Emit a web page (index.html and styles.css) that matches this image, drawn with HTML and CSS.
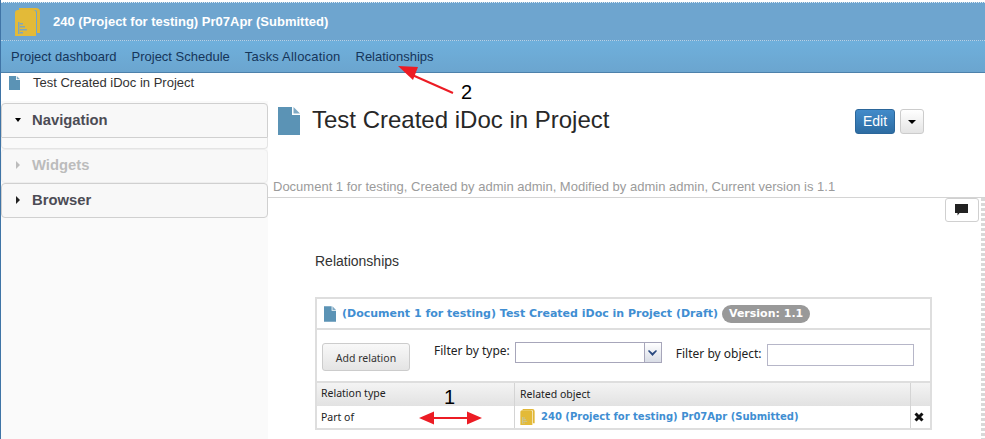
FILE: index.html
```html
<!DOCTYPE html>
<html>
<head lang="en">
    <meta charset="UTF-8">
    <title>Test Created iDoc in Project</title>
    <link rel="stylesheet" href="styles.css">
</head>
<body>
<div id="page">
    <div id="header">
        <svg class="project-icon" width="25" height="28" viewBox="0 0 25 28">
            <path d="M4 0h17a4 4 0 0 1 4 4v21h-3V4a2 2 0 0 0-2-2H4z" fill="#e0b636"/>
            <path d="M0 5a3 3 0 0 1 3-3h15a3 3 0 0 1 3 3v23H0z" fill="#e3ba38"/>
            <path d="M3 14h1.500v12H3zM5 15h3v1.500H5zM5 18h5v1.500H5zM5 21h7v1.500H5zM5 24h3v1.500H5z" fill="#7fa6bb"/>
        </svg>
        <span class="header-title">240 (Project for testing) Pr07Apr (Submitted)</span>
    </div>
    <ul id="nav">
        <li>Project dashboard</li>
        <li>Project Schedule</li>
        <li class="nav-wide">Tasks Allocation</li>
        <li>Relationships</li>
    </ul>
    <div id="crumb">
        <svg class="doc-icon" width="11" height="14" viewBox="0 0 22 28"><path d="M0 0h14v8h8v20H0z" fill="#5b93b5"/><path d="M15.500 0L22 6.500h-6.500z" fill="#7fa9c4"/></svg>
        <span>Test Created iDoc in Project</span>
    </div>
    <div id="main">
        <div id="sidebar">
            <div class="panel panel-open"><i class="caret-down"></i>Navigation</div>
            <div class="panel-rest"></div>
            <div class="panel panel-off"><i class="caret-right"></i>Widgets</div>
            <div class="panel"><i class="caret-right"></i>Browser</div>
        </div>
        <div id="content">
            <div class="title-row">
                <svg class="title-icon" width="22" height="28" viewBox="0 0 22 28"><path d="M0 0h14v8h8v20H0z" fill="#5b93b5"/><path d="M15.500 0L22 6.500h-6.500z" fill="#7fa9c4"/></svg>
                <h1>Test Created iDoc in Project</h1>
                <div class="title-buttons">
                    <span class="btn-edit">Edit</span>
                    <span class="btn-more"><i class="caret-down"></i></span>
                </div>
            </div>
            <div class="meta">Document 1 for testing, Created by admin admin, Modified by admin admin, Current version is 1.1</div>
            <div class="body">
                <div class="comment-row">
                    <span class="btn-comment">
                        <svg width="14" height="12" viewBox="0 0 14 12"><path d="M0 0h13v9H4.500L2.500 11.500V9H0z" fill="#222"/></svg>
                    </span>
                </div>
                <div class="section-title">Relationships</div>
                <div class="rel-box">
                    <div class="rel-head">
                        <svg width="12" height="16" viewBox="0 0 22 28"><path d="M0 0h14v8h8v20H0z" fill="#5b93b5"/><path d="M15.500 0L22 6.500h-6.500z" fill="#7fa9c4"/></svg>
                        <a class="rel-link">(Document 1 for testing) Test Created iDoc in Project (Draft)</a>
                        <span class="version">Version: 1.1</span>
                    </div>
                    <div class="rel-filter">
                        <span class="btn-add">Add relation</span>
                        <label class="filter-type">Filter by type:</label>
                        <span class="select"><span class="select-arrow"><svg width="9" height="6" viewBox="0 0 9 6"><path d="M0 1l1-1 3.500 3L8 0l1 1-4.500 5z" fill="#2a4a80"/></svg></span></span>
                        <label class="filter-object">Filter by object:</label>
                        <span class="input"></span>
                    </div>
                    <div class="rel-row rel-row-head">
                        <div class="col-type">Relation type</div>
                        <div class="col-object">Related object</div>
                        <div class="col-del"></div>
                    </div>
                    <div class="rel-row">
                        <div class="col-type">Part of</div>
                        <div class="col-object">
                            <svg width="15" height="16" viewBox="0 0 25 28">
                                <path d="M4 0h17a4 4 0 0 1 4 4v21h-3V4a2 2 0 0 0-2-2H4z" fill="#e0b636"/>
                                <path d="M0 5a3 3 0 0 1 3-3h15a3 3 0 0 1 3 3v23H0z" fill="#e3ba38"/>
                                <path d="M3 14h1.500v12H3zM5 15h3v1.500H5zM5 18h5v1.500H5zM5 21h7v1.500H5zM5 24h3v1.500H5z" fill="#c7c7a0"/>
                            </svg>
                            <a class="rel-link rel-link-small">240 (Project for testing) Pr07Apr (Submitted)</a>
                        </div>
                        <div class="col-del">
                            <svg width="10" height="10" viewBox="0 0 10 10"><path d="M1.500 1.500L8.500 8.500M8.500 1.500L1.500 8.500" stroke="#111" stroke-width="3"/></svg>
                        </div>
                    </div>
                </div>
            </div>
        </div>
    </div>
    <div class="dots"></div>
    <!-- red annotations drawn on the screenshot -->
    <svg class="marks" width="985" height="439" viewBox="0 0 985 439">
        <path d="M453 93L410 74" stroke="#ec1c24" stroke-width="2"/>
        <path d="M398 66L418 67 413 80z" fill="#ec1c24"/>
        <path d="M430 418H470" stroke="#ec1c24" stroke-width="2"/>
        <path d="M419 418L434 411.500V424.500z" fill="#ec1c24"/>
        <path d="M482 418L467 411.500V424.500z" fill="#ec1c24"/>
    </svg>
    <span class="mark-num mark-two">2</span>
    <span class="mark-num mark-one">1</span>
</div>
</body>
</html>
```

FILE: styles.css
```css
* {
    padding: 0;
    margin: 0;
    box-sizing: border-box;
}

ul, ol {
    list-style: none;
}

body {
    font-family: "Liberation Sans", Arial, sans-serif;
    background: #fff;
    overflow: hidden;
}

#page {
    width: 985px;
    height: 439px;
    position: relative;
    overflow: hidden;
    border-left: 1px solid #3f74a6;
    padding-top: 2px;
}

#header {
    height: 39px;
    background: #6ea5cf;
    border-top: 1px dotted #dbe8f2;
    border-bottom: 1px dotted #b5d3e8;
    display: flex;
    align-items: center;
    padding-left: 14px;
}

.project-icon {
    margin-right: 13px;
}

.header-title {
    color: #fff;
    font-size: 13px;
    font-weight: bold;
}

#nav {
    height: 32px;
    background: linear-gradient(#6fb0dc, #6ba5cf);
    border-bottom: 1px solid #4d81ab;
    display: flex;
    gap: 15px;
    padding: 8px 0 0 10px;
    font-size: 13px;
    line-height: 16px;
    color: #15355a;
}

.nav-wide {
    letter-spacing: 0.200px;
}

#crumb {
    height: 28px;
    display: flex;
    padding: 2px 0 0 8px;
    gap: 13px;
    font-size: 13px;
    line-height: 16px;
    color: #333;
}

#crumb svg {
    margin-top: 1px;
}

#main {
    display: flex;
    height: 338px;
}

#sidebar {
    width: 267px;
    background: #fafafa;
    padding-top: 2px;
    flex: none;
}

.panel {
    height: 35px;
    border: 1px solid #d0d0d0;
    border-radius: 4px;
    background: #f8f8f8;
    font-size: 14.800px;
    font-weight: bold;
    color: #4c4c55;
    display: flex;
    align-items: center;
    padding: 0 0 2px 13px;
}

.panel .caret-down {
    margin-right: 11px;
}

.panel .caret-right {
    margin: 0 12px 0 1px;
}

.panel-open {
    border-radius: 4px 4px 0 0;
}

.panel-rest {
    height: 11px;
    border: 1px solid #e4e4e4;
    border-top: 0;
    border-radius: 0 0 4px 4px;
}

.panel-off {
    height: 34px;
    border-color: #eeeeee;
    color: #bcbcbc;
}

.panel-off .caret-right {
    border-left-color: #bcbcbc;
}

.caret-down {
    display: inline-block;
    border-left: 3.500px solid transparent;
    border-right: 3.500px solid transparent;
    border-top: 4px solid #000;
}

.caret-right {
    display: inline-block;
    border-top: 4px solid transparent;
    border-bottom: 4px solid transparent;
    border-left: 4px solid #222;
}

#content {
    flex: 1;
    min-width: 0;
}

.title-row {
    display: flex;
    padding: 6px 61px 0 10px;
    height: 74px;
}

.title-icon {
    flex: none;
}

h1 {
    font-size: 24px;
    font-weight: normal;
    line-height: 26px;
    color: #282828;
    margin-left: 12px;
}

.title-buttons {
    display: flex;
    gap: 5px;
    margin-left: auto;
    padding-top: 2px;
    align-items: flex-start;
}

.btn-edit {
    width: 40px;
    height: 25px;
    background: linear-gradient(#428bca, #2d6ca2);
    border: 1px solid #2b669a;
    border-radius: 3px;
    color: #fff;
    font-size: 14px;
    line-height: 23px;
    text-align: center;
}

.btn-more {
    width: 24px;
    height: 25px;
    background: linear-gradient(#fff, #e4e4e4);
    border: 1px solid #ccc;
    border-radius: 3px;
    display: flex;
    align-items: center;
    justify-content: center;
}

.btn-more .caret-down {
    border-left-width: 4px;
    border-right-width: 4px;
}

.meta {
    height: 23px;
    padding: 4px 0 0 5px;
    border-bottom: 1px solid #d4d4d4;
    font-size: 13px;
    line-height: 16px;
    color: #9b9b9b;
    white-space: nowrap;
}

.body {
    padding-left: 47px;
}

.comment-row {
    display: flex;
    justify-content: flex-end;
    padding: 0 6px 0 0;
    height: 24px;
}

.btn-comment {
    width: 34px;
    height: 24px;
    border: 1px solid #d0d0d0;
    border-radius: 3px;
    background: #fff;
    display: flex;
    align-items: center;
    justify-content: center;
}

.section-title {
    font-size: 14px;
    line-height: 16px;
    color: #333;
    margin-top: 31px;
}

.rel-box {
    width: 617px;
    margin-top: 28px;
    border: 2px solid #dedede;
    font-family: "Noto Sans", sans-serif;
    font-size: 10.500px;
    color: #222;
}

.rel-head {
    height: 31px;
    border-bottom: 2px solid #dedede;
    display: flex;
    align-items: center;
    padding-left: 7px;
    gap: 6px;
}

.rel-link {
    font-family: "DejaVu Sans", sans-serif;
    color: #408ed2;
    font-weight: bold;
    font-size: 11px;
    white-space: nowrap;
}

.rel-link-small {
    font-size: 10px;
}

.version {
    font-family: "DejaVu Sans", sans-serif;
    background: #999;
    color: #fff;
    font-weight: bold;
    font-size: 11px;
    line-height: 18px;
    padding: 0 7px;
    border-radius: 9px;
    margin-left: -2px;
}

.rel-filter {
    height: 53px;
    border-bottom: 2px solid #dedede;
    display: flex;
    align-items: flex-start;
    font-size: 12px;
    line-height: 16px;
}

.btn-add {
    width: 88px;
    height: 28px;
    margin: 13px 0 0 5px;
    border: 1px solid #ccc;
    border-radius: 3px;
    background: linear-gradient(#f8f8f8, #e4e4e4);
    text-align: center;
    line-height: 28px;
    font-size: 10.500px;
    color: #333;
}

.filter-type {
    margin: 13px 5px 0 24px;
}

.select {
    width: 147px;
    height: 21px;
    margin-top: 12px;
    border: 1px solid #a7a6ba;
    background: #fff;
    display: flex;
    justify-content: flex-end;
}

.select-arrow {
    width: 17px;
    border-left: 1px solid #a7a6ba;
    background: linear-gradient(#fff, #d9dde6);
    display: flex;
    align-items: center;
    justify-content: center;
}

.filter-object {
    margin: 16px 5px 0 14px;
}

.input {
    width: 147px;
    height: 22px;
    margin-top: 14px;
    border: 1px solid #b6b6c8;
    background: #fff;
}

.rel-row {
    display: grid;
    grid-template-columns: 197px 396px 1fr;
    height: 22px;
    line-height: 22px;
}

.rel-row-head {
    height: 23px;
    line-height: 21px;
    background: linear-gradient(#f4f4f4, #e2e2e2);
}

.col-type {
    padding-left: 4px;
}

.col-object {
    padding-left: 5px;
    border-left: 1px solid #d4d4d4;
    display: flex;
    align-items: center;
    gap: 6px;
}

.col-del {
    border-left: 1px solid #d4d4d4;
    display: flex;
    align-items: center;
    justify-content: center;
    padding-right: 4px;
}

.dots {
    position: absolute;
    left: 980px;
    top: 198px;
    width: 4px;
    height: 241px;
    background: repeating-linear-gradient(#d8d8d8 0 3px, #fff 3px 5px);
}

.marks {
    position: absolute;
    left: -1px;
    top: 0;
}

.mark-num {
    position: absolute;
    font-size: 20px;
    line-height: 22px;
    color: #000;
}

.mark-two {
    left: 460px;
    top: 81px;
}

.mark-one {
    left: 443px;
    top: 386px;
}
```
